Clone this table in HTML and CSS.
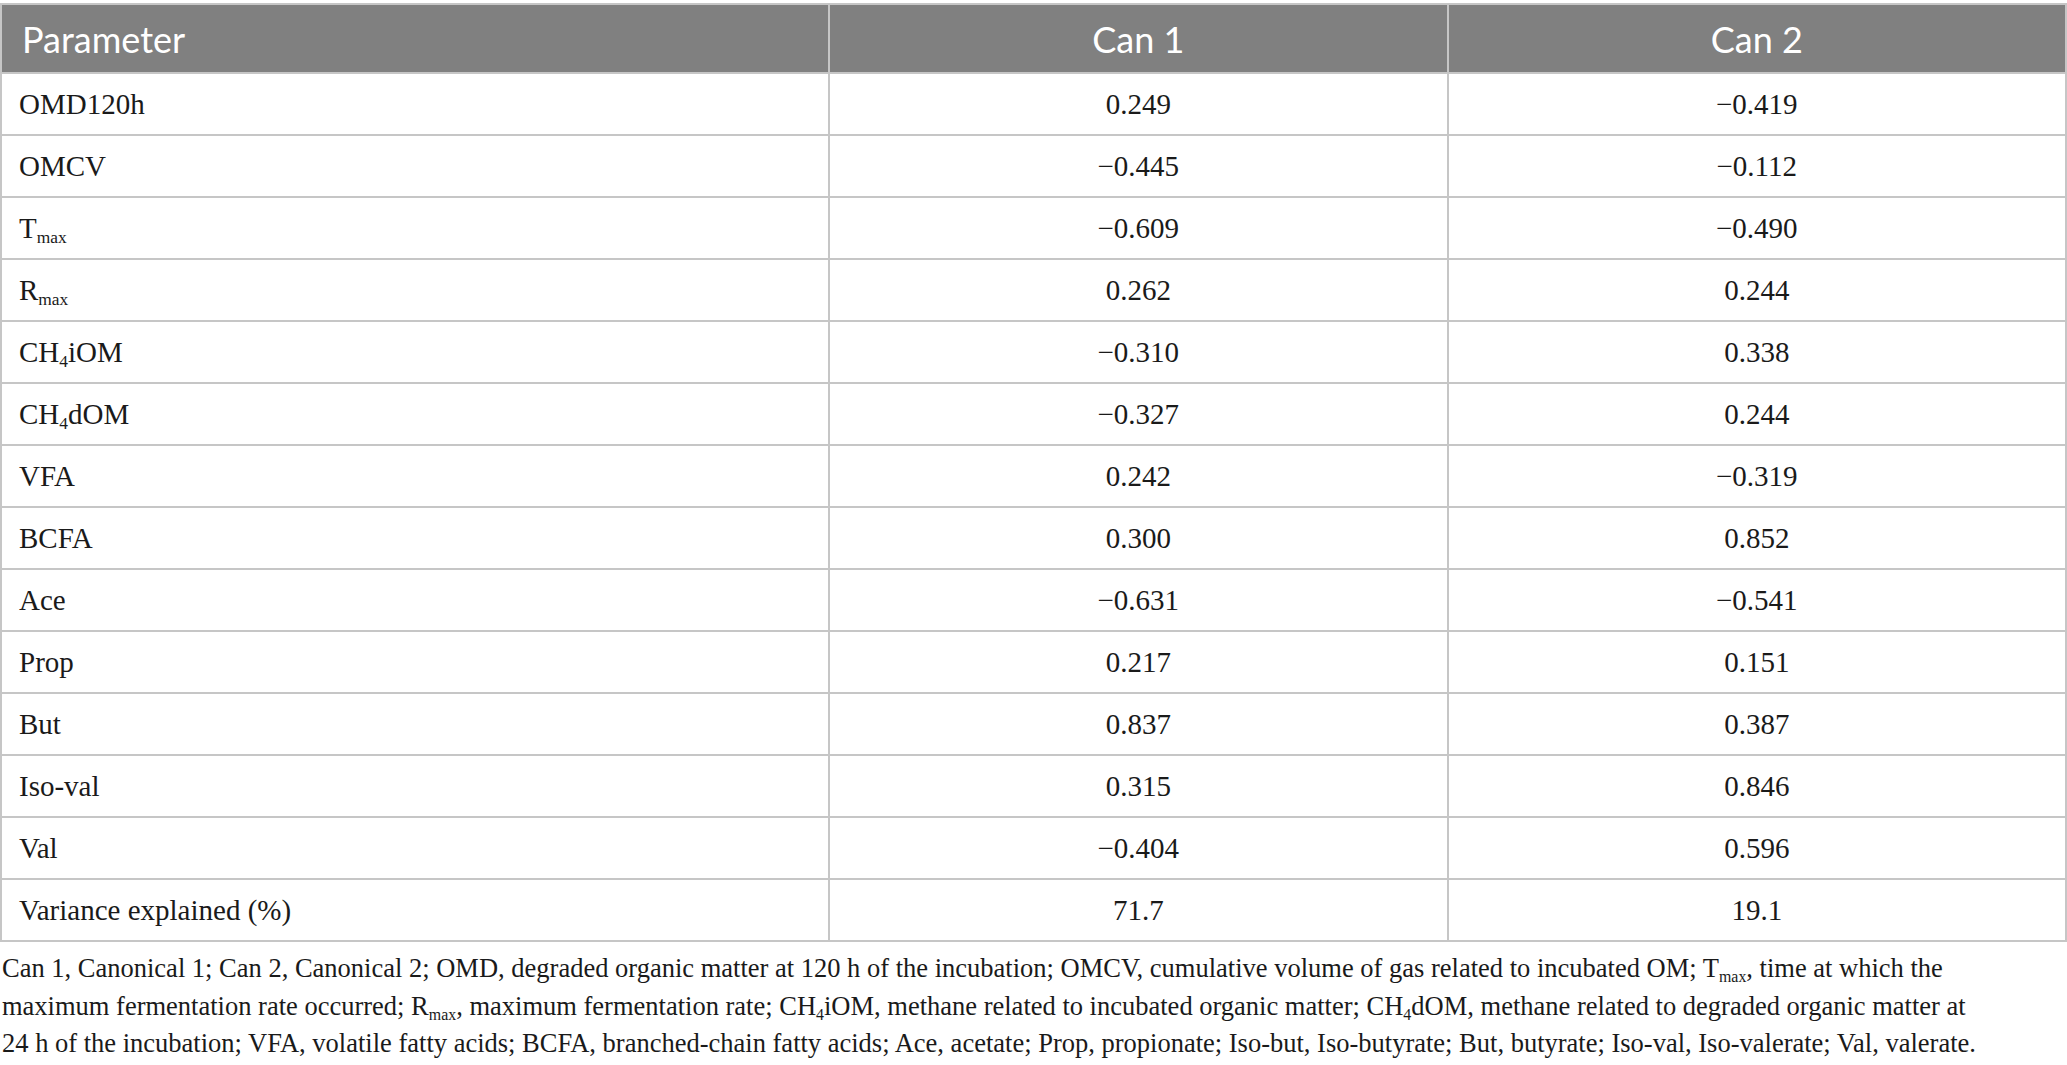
FILE: index.html
```html
<!DOCTYPE html>
<html lang="en">
<head>
  <meta charset="UTF-8">
  <meta name="viewport" content="width=device-width, initial-scale=1.0">
  <title>Canonical discriminant analysis</title>
  <link rel="stylesheet" href="styles.css">
</head>
<body>
  <div class="table-wrap">
    <table class="data-table">
      <thead>
        <tr>
          <th class="param">Parameter</th>
          <th>Can 1</th>
          <th>Can 2</th>
        </tr>
      </thead>
      <tbody>
        <tr><td class="param">OMD120h</td><td>0.249</td><td>−0.419</td></tr>
        <tr><td class="param">OMCV</td><td>−0.445</td><td>−0.112</td></tr>
        <tr><td class="param">T<sub>max</sub></td><td>−0.609</td><td>−0.490</td></tr>
        <tr><td class="param">R<sub>max</sub></td><td>0.262</td><td>0.244</td></tr>
        <tr><td class="param">CH<sub>4</sub>iOM</td><td>−0.310</td><td>0.338</td></tr>
        <tr><td class="param">CH<sub>4</sub>dOM</td><td>−0.327</td><td>0.244</td></tr>
        <tr><td class="param">VFA</td><td>0.242</td><td>−0.319</td></tr>
        <tr><td class="param">BCFA</td><td>0.300</td><td>0.852</td></tr>
        <tr><td class="param">Ace</td><td>−0.631</td><td>−0.541</td></tr>
        <tr><td class="param">Prop</td><td>0.217</td><td>0.151</td></tr>
        <tr><td class="param">But</td><td>0.837</td><td>0.387</td></tr>
        <tr><td class="param">Iso-val</td><td>0.315</td><td>0.846</td></tr>
        <tr><td class="param">Val</td><td>−0.404</td><td>0.596</td></tr>
        <tr><td class="param">Variance explained (%)</td><td>71.7</td><td>19.1</td></tr>
      </tbody>
    </table>
  </div>

  <p class="footnote">
    Can 1, Canonical 1; Can 2, Canonical 2; OMD, degraded organic matter at 120 h of the incubation; OMCV, cumulative volume of gas related to incubated OM; T<sub>max</sub>, time at which the<br>
    maximum fermentation rate occurred; R<sub>max</sub>, maximum fermentation rate; CH<sub>4</sub>iOM, methane related to incubated organic matter; CH<sub>4</sub>dOM, methane related to degraded organic matter at<br>
    24 h of the incubation; VFA, volatile fatty acids; BCFA, branched-chain fatty acids; Ace, acetate; Prop, propionate; Iso-but, Iso-butyrate; But, butyrate; Iso-val, Iso-valerate; Val, valerate.
  </p>
</body>
</html>
```

FILE: styles.css
```css
body { margin: 0; background: #fff; color: #1a1a1a; font-family: "Liberation Serif", "Times New Roman", serif; }

.table-wrap { padding-top: 3px; }
.data-table { width: 100%; border-collapse: collapse; table-layout: fixed; }
.data-table th, .data-table td { border: 2px solid #c6c6c6; text-align: center; vertical-align: middle; }
.data-table th { background: #808080; color: #fff; font-family: Lato, "Open Sans", sans-serif; font-weight: 400; font-size: 36px; height: 67px; padding: 0 20px; }
.data-table th.param { width: 786px; }
.data-table td { height: 60px; padding: 0 17px; font-size: 29px; }
.data-table .param { text-align: left; }

sub { font-size: 0.6em; vertical-align: -0.3em; line-height: 0; }

.footnote { margin: 8px 0 0; padding-left: 2px; font-size: 26.5px; line-height: 37.5px; white-space: nowrap; }
```
